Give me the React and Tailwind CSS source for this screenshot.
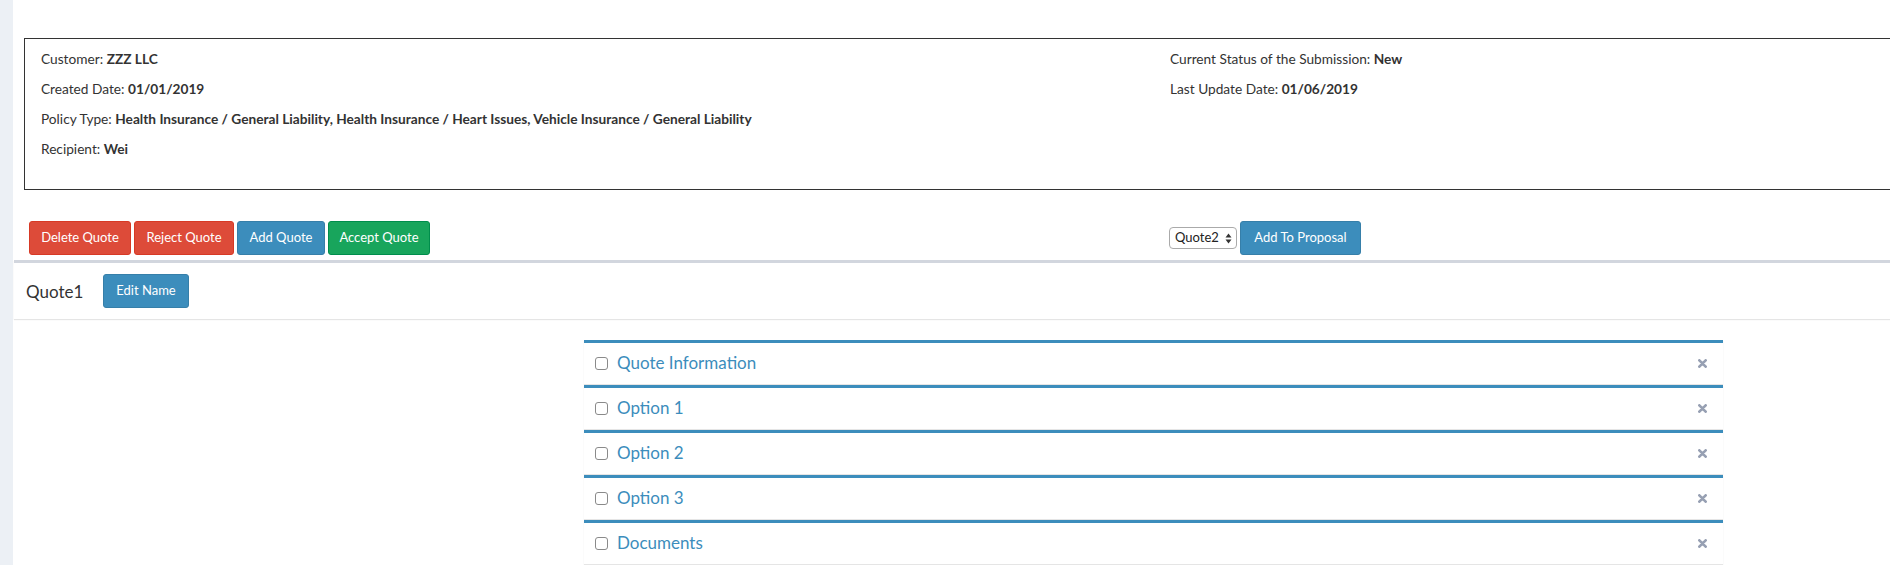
import React from "react";

const sections = ["Quote Information", "Option 1", "Option 2", "Option 3", "Documents"];

function CloseIcon() {
  return (
    <svg width="9" height="9" viewBox="0 0 10 10" className="text-[#97a0b3]">
      <path d="M1.5 1.5 L8.5 8.5 M8.5 1.5 L1.5 8.5" stroke="currentColor" strokeWidth="3" strokeLinecap="round" />
    </svg>
  );
}

function SelectArrows() {
  return (
    <svg width="7" height="11" viewBox="0 0 7 11" className="text-[#333]">
      <path d="M3.5 0.5 L6.5 4.5 L0.5 4.5 Z M3.5 10.5 L6.5 6.5 L0.5 6.5 Z" fill="currentColor" />
    </svg>
  );
}

function Info({ label, value }) {
  return (
    <p className="mb-[10px] leading-[20px]">
      {label}: <b className="font-bold">{value}</b>
    </p>
  );
}

export default function App() {
  return (
    <div className="h-[565px] w-full overflow-hidden bg-[#ecf0f5] text-[#333] font-['Lato','Liberation_Sans',sans-serif]">
      <div className="ml-[13px] h-full w-[2320px] bg-white pt-[38px]">
        {/* submission info */}
        <div className="ml-[11px] flex border border-r-0 border-[#333] pt-[10px] pb-[20px] text-[13.7px]">
          <div className="w-[1145px] pl-[16px]">
            <Info label="Customer" value="ZZZ LLC" />
            <Info label="Created Date" value="01/01/2019" />
            <Info
              label="Policy Type"
              value="Health Insurance / General Liability, Health Insurance / Heart Issues, Vehicle Insurance / General Liability"
            />
            <Info label="Recipient" value="Wei" />
          </div>
          <div>
            <Info label="Current Status of the Submission" value="New" />
            <Info label="Last Update Date" value="01/06/2019" />
          </div>
        </div>

        {/* actions */}
        <div className="mt-[31px] flex items-center text-[13px] text-white">
          <div className="flex w-[1156px] gap-[3px] pl-[16px]">
            <button className="h-[34px] w-[102px] rounded-[3px] border border-[#d73925] bg-[#dd4b39]">Delete Quote</button>
            <button className="h-[34px] w-[100px] rounded-[3px] border border-[#d73925] bg-[#dd4b39]">Reject Quote</button>
            <button className="h-[34px] w-[88px] rounded-[3px] border border-[#367fa9] bg-[#3c8dbc]">Add Quote</button>
            <button className="h-[34px] w-[102px] rounded-[3px] border border-[#008d4c] bg-[#18a55c]">Accept Quote</button>
          </div>
          <div className="flex items-center gap-[3px]">
            <div className="flex h-[22px] w-[68px] items-center justify-between rounded-[4px] border border-[#aaa] bg-white pl-[5px] pr-[4px] text-[13px] text-[#222]">
              <span>Quote2</span>
              <SelectArrows />
            </div>
            <button className="h-[34px] w-[121px] rounded-[3px] border border-[#367fa9] bg-[#3c8dbc]">Add To Proposal</button>
          </div>
        </div>

        {/* quote box */}
        <div className="ml-px mt-[5px] flex items-center border-t-[3px] border-[#d2d6de] bg-white px-[12px] py-[11px] shadow-[0_1px_1px_rgba(0,0,0,0.1)]">
          <h3 className="w-[77px] text-[17px] leading-none">Quote1</h3>
          <button className="h-[34px] w-[86px] rounded-[3px] border border-[#367fa9] bg-[#3c8dbc] text-[13px] text-white">Edit Name</button>
        </div>

        {/* sections */}
        <div className="ml-[571px] mt-[21px] flex w-[1139px] flex-col gap-px">
          {sections.map((s) => (
            <div
              key={s}
              className="flex h-[44px] items-center border-t-[3px] border-[#3c8dbc] bg-white pl-[11px] pr-[16px] shadow-[0_1px_1px_rgba(0,0,0,0.1)]"
            >
              <span className="h-[13px] w-[13px] rounded-[3px] border border-[#8a8a8a] bg-white" />
              <span className="ml-[9px] -mt-[3px] flex-1 text-[17px] leading-none text-[#3c8dbc]">{s}</span>
              <CloseIcon />
            </div>
          ))}
        </div>
      </div>
    </div>
  );
}
